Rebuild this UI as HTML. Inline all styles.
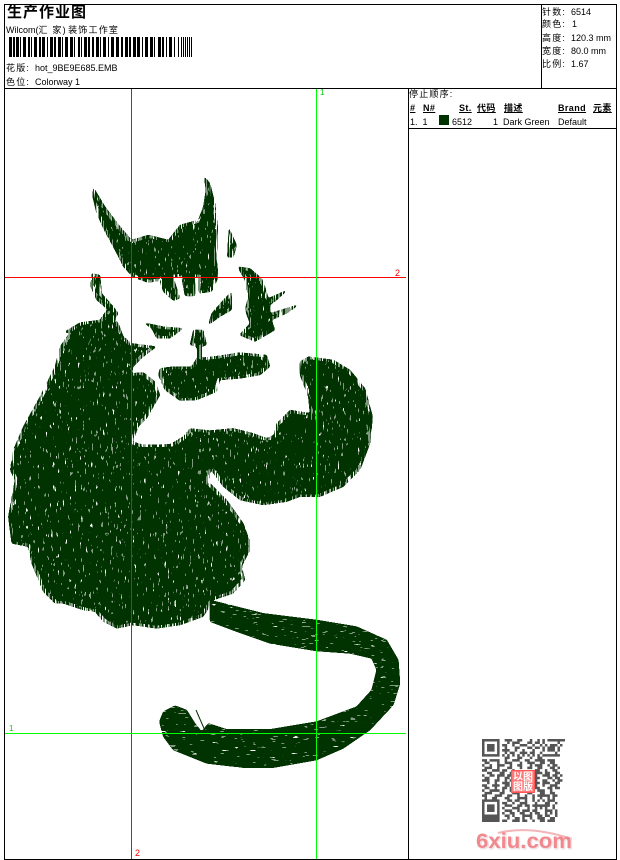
<!DOCTYPE html>
<html><head><meta charset="utf-8"><style>
html,body{margin:0;padding:0;background:#fff;width:620px;height:860px;overflow:hidden}
#p{position:relative;width:620px;height:860px;overflow:hidden;font:9px "Liberation Sans","WenQuanYi Zen Hei","Noto Sans CJK SC",sans-serif;color:#000}
.t{position:absolute;white-space:pre;line-height:12px}
.c{letter-spacing:1.2px}
.b{position:absolute;background:#000}
.u{font-weight:bold;text-decoration:underline;letter-spacing:.4px}
svg{position:absolute;left:0;top:0}
</style></head><body><div id="p">
<svg width="620" height="860">
<defs>
<filter id="fv" filterUnits="userSpaceOnUse" x="0" y="150" width="420" height="500" color-interpolation-filters="sRGB">
<feGaussianBlur in="SourceAlpha" stdDeviation="1" result="b"/>
<feComponentTransfer in="b" result="s"><feFuncA type="linear" slope="20" intercept="-7.5"/></feComponentTransfer>
<feTurbulence type="fractalNoise" baseFrequency=".6 .13" numOctaves="2" seed="4" result="n"/>
<feColorMatrix in="n" type="matrix" values="0 0 0 0 1 0 0 0 0 1 0 0 0 0 1 25 0 0 0 -17.6" result="sp"/>
<feTurbulence type="fractalNoise" baseFrequency=".9 .03" numOctaves="1" seed="9" result="n2"/>
<feColorMatrix in="n2" type="matrix" values="0 0 0 0 1 0 0 0 0 1 0 0 0 0 1 25 0 0 0 -13.5" result="st"/>
<feMorphology in="s" operator="erode" radius="2.5" result="core"/>
<feComposite in="st" in2="core" operator="out" result="fr"/>
<feFlood flood-color="#003300" result="f"/>
<feComposite in="f" in2="s" operator="in" result="d"/>
<feComposite in="d" in2="sp" operator="out" result="d2"/>
<feComposite in="d2" in2="fr" operator="out"/>
</filter>
<filter id="fh" filterUnits="userSpaceOnUse" x="140" y="590" width="280" height="190" color-interpolation-filters="sRGB">
<feGaussianBlur in="SourceAlpha" stdDeviation="1" result="b"/>
<feComponentTransfer in="b" result="s"><feFuncA type="linear" slope="20" intercept="-7.5"/></feComponentTransfer>
<feTurbulence type="fractalNoise" baseFrequency=".1 .7" numOctaves="2" seed="7" result="n"/>
<feColorMatrix in="n" type="matrix" values="0 0 0 0 1 0 0 0 0 1 0 0 0 0 1 25 0 0 0 -17.6" result="sp"/>
<feFlood flood-color="#003300" result="f"/>
<feComposite in="f" in2="s" operator="in" result="d"/>
<feComposite in="d" in2="sp" operator="out"/>
</filter>
</defs>
<g filter="url(#fv)" fill="#003300">
<g transform="translate(0,310) scale(.33333)">
<path d="M190 68L240 38 300 30 320 0 355 40 370 80 395 100 470 110 430 140 400 170 395 190 430 187 465 215 480 255 440 325 415 350 398 395 430 405 510 403 550 380 570 355 630 362 700 355 760 370 800 385 822 375 830 340 870 300 930 310 925 260 900 195 900 155 925 140 1000 150 1050 180 1095 235 1118 320 1110 400 1080 480 1030 530 960 560 900 560 860 575 790 585 720 570 670 530 632 478 625 515 680 570 730 640 755 710 725 770 735 810 700 850 640 870 610 920 540 945 470 955 400 945 350 955 310 935 285 905 250 900 190 880 165 880 130 845 95 760 85 710 35 700 25 620 45 510 30 480 40 420 70 350 120 260 165 170 180 110 210 68Z"/>
<path d="M480 175L520 170 575 170 590 145 640 140 720 128 800 135 810 170 780 195 720 205 660 210 650 245 590 270 540 272 495 240 475 195Z"/>
<path d="M580 60L610 60 620 105 605 110 605 145 590 145 590 110 570 105Z"/>
<path d="M430 38L490 50 550 55 510 85 470 85 455 55Z"/>
</g>
<g transform="translate(80,170) scale(.33333)">
<path d="M40 50L38 80 50 130 75 185 105 240 130 290 160 322 205 338 240 332 280 322 300 318 415 322 410 270 413 170 405 100 390 40 372 18 378 60 370 110 355 150 300 165 265 210 205 195 155 210 120 170 75 110 45 60Z"/>
<path d="M240 335L280 322 300 385 280 392 250 365Z"/>
<path d="M305 322L345 322 345 378 315 378Z"/>
<path d="M355 322L415 322 395 365 355 370Z"/>
<path d="M445 170L470 225 460 262 442 262 445 200Z"/>
<path d="M455 365L455 420 420 440 385 465 395 430 430 390Z"/>
<path d="M472 290L510 295 545 325 555 350 565 385 625 358 590 390 570 405 570 430 660 402 620 430 575 450 585 480 525 515 478 495 510 460 495 420 505 380 495 330Z"/>
<path d="M35 310L60 315 65 370 100 410 115 430 100 455 125 490 70 450 85 420 50 390 32 350Z"/>
</g>
</g>
<g filter="url(#fh)" fill="#003300">
<g transform="translate(130,590) scale(.33333)">
<path d="M240 30L400 70 560 90 680 110 770 150 805 210 810 280 790 345 720 420 640 475 560 510 430 533 340 533 230 520 130 480 100 440 88 395 100 365 135 347 170 360 195 400 215 425 235 400 290 418 420 418 560 395 680 350 725 300 740 240 725 205 660 190 560 183 420 160 320 125 240 95Z"/>
</g>
</g>
<path d="M196 710L206 733" stroke="#003300" stroke-width="1" fill="none"/>
<g shape-rendering="crispEdges">
<rect x="131" y="89" width="1" height="770" fill="#f00"/>
<rect x="5" y="277" width="401" height="1" fill="#f00"/>
<rect x="316" y="89" width="1" height="770" fill="#0f0"/>
<rect x="5" y="733" width="401" height="1" fill="#0f0"/>
<path fill="#000" d="M9 37h3v20H9zM13 37h2v20h-2zM16 37h3v20h-3zM20 37h1v20h-1zM23 37h3v20h-3zM28 37h2v20h-2zM31 37h1v20h-1zM34 37h3v20h-3zM39 37h2v20h-2zM42 37h3v20h-3zM47 37h1v20h-1zM50 37h3v20h-3zM54 37h2v20h-2zM58 37h3v20h-3zM62 37h1v20h-1zM65 37h3v20h-3zM70 37h3v20h-3zM74 37h1v20h-1zM78 37h2v20h-2zM81 37h1v20h-1zM84 37h3v20h-3zM88 37h2v20h-2zM92 37h2v20h-2zM96 37h3v20h-3zM100 37h1v20h-1zM103 37h3v20h-3zM108 37h1v20h-1zM111 37h3v20h-3zM116 37h3v20h-3zM121 37h2v20h-2zM125 37h3v20h-3zM129 37h2v20h-2zM133 37h3v20h-3zM137 37h3v20h-3zM142 37h1v20h-1zM145 37h3v20h-3zM150 37h3v20h-3zM154 37h1v20h-1zM158 37h3v20h-3zM162 37h2v20h-2zM166 37h1v20h-1zM169 37h3v20h-3zM174 37h1v20h-1zM178 37h1v20h-1zM181 37h1v20h-1zM183 37h1v20h-1zM185 37h1v20h-1zM187 37h1v20h-1zM189 37h1v20h-1zM191 37h1v20h-1z"/>
<rect x="439" y="115" width="10" height="10" fill="#003300"/>
</g>
</svg>
<div class="b" style="left:4px;top:4px;width:613px;height:1px"></div>
<div class="b" style="left:4px;top:859px;width:613px;height:1px"></div>
<div class="b" style="left:4px;top:4px;width:1px;height:856px"></div>
<div class="b" style="left:616px;top:4px;width:1px;height:856px"></div>
<div class="b" style="left:4px;top:88px;width:613px;height:1px"></div>
<div class="b" style="left:541px;top:4px;width:1px;height:84px"></div>
<div class="b" style="left:408px;top:88px;width:1px;height:771px"></div>
<div class="b" style="left:408px;top:128px;width:208px;height:1px"></div>
<div class="t" style="left:7px;top:4px;font-size:15px;line-height:18px;font-weight:bold;letter-spacing:1px">生产作业图</div>
<div class="t" style="left:6px;top:24px">Wilcom(<span class="c">汇 家</span>) <span class="c">装饰工作室</span></div>
<div class="t c" style="left:6px;top:62px">花版:</div><div class="t" style="left:35px;top:62px">hot_9BE9E685.EMB</div>
<div class="t c" style="left:6px;top:76px">色位:</div><div class="t" style="left:35px;top:76px">Colorway 1</div>
<div class="t c" style="left:542px;top:6px">针数:</div><div class="t" style="left:571px;top:6px">6514</div>
<div class="t c" style="left:542px;top:18px">颜色:</div><div class="t" style="left:572px;top:18px">1</div>
<div class="t c" style="left:542px;top:32px">高度:</div><div class="t" style="left:571px;top:32px">120.3 mm</div>
<div class="t c" style="left:542px;top:45px">宽度:</div><div class="t" style="left:571px;top:45px">80.0 mm</div>
<div class="t c" style="left:542px;top:58px">比例:</div><div class="t" style="left:571px;top:58px">1.67</div>
<div class="t c" style="left:409px;top:88px">停止顺序:</div>
<div class="t u" style="left:410px;top:102px">#</div>
<div class="t u" style="left:423px;top:102px">N#</div>
<div class="t u" style="left:459px;top:102px">St.</div>
<div class="t u" style="left:477px;top:102px">代码</div>
<div class="t u" style="left:504px;top:102px">描述</div>
<div class="t u" style="left:558px;top:102px">Brand</div>
<div class="t u" style="left:593px;top:102px">元素</div>
<div class="t" style="left:410px;top:116px">1.  1</div>
<div class="t" style="left:452px;top:116px">6512</div>
<div class="t" style="left:493px;top:116px">1</div>
<div class="t" style="left:503px;top:116px">Dark Green</div>
<div class="t" style="left:558px;top:116px">Default</div>
<div class="t" style="left:320px;top:87px;color:#0c0;font-size:8px">1</div>
<div class="t" style="left:9px;top:723px;color:#0c0;font-size:8px">1</div>
<div class="t" style="left:395px;top:267px;color:#f00">2</div>
<div class="t" style="left:135px;top:847px;color:#f00">2</div>
<svg style="left:482px;top:739px" width="83" height="83" viewBox="0 0 33 33">
<path fill="none" stroke="#555" d="M0 .5h7m2 0h3m2 0h2m3 0h1m2 0h1m1 0h1m1 0h7M0 1.500h1m5 0h1m3 0h1m1 0h3m3 0h2m1 0h2m1 0h1m5 0h1M0 2.500h1m1 0h3m1 0h1m1 0h2m2 0h1m2 0h3m2 0h1m2 0h1m1 0h1m1 0h3m1 0h1M0 3.500h1m1 0h3m1 0h1m2 0h1m3 0h2m3 0h2m1 0h2m1 0h1m1 0h3m1 0h1M0 4.500h1m1 0h3m1 0h1m1 0h3m2 0h1m2 0h1m3 0h1m3 0h1m1 0h3m1 0h1M0 5.500h1m5 0h1m2 0h1m1 0h2m2 0h3m1 0h2m2 0h1m5 0h1M0 6.500h7m1 0h1m1 0h1m1 0h1m1 0h1m1 0h1m1 0h1m1 0h1m1 0h1m1 0h7M9 7.500h2m3 0h2m3 0h1m2 0h2M0 8.500h2m1 0h4m2 0h1m2 0h3m2 0h2m2 0h4m1 0h3M1 9.500h2m3 0h1m2 0h3m3 0h1m2 0h3m2 0h2m2 0h2M0 10.500h1m2 0h1m2 0h3m2 0h1m2 0h2m3 0h1m1 0h3m2 0h1m1 0h2M1 11.500h3m2 0h1m3 0h2m3 0h1m2 0h2m2 0h2m3 0h2m1 0h1M0 12.500h2m2 0h3m1 0h2m2 0h1m8 0h2m2 0h1m2 0h2M2 13.500h2m3 0h2m2 0h1m9 0h3m1 0h2m2 0h2M0 14.500h1m2 0h2m1 0h3m1 0h2m9 0h1m2 0h3m1 0h2m1 0h1M1 15.500h2m3 0h1m2 0h2m9 0h3m3 0h2m1 0h2M0 16.500h3m2 0h2m2 0h1m1 0h1m9 0h1m2 0h2m2 0h1m1 0h2M2 17.500h1m2 0h1m2 0h3m10 0h2m1 0h3m2 0h2M0 18.500h2m2 0h3m2 0h2m10 0h1m2 0h1m2 0h3M1 19.500h2m2 0h1m2 0h2m1 0h2m7 0h3m3 0h2m1 0h2M0 20.500h1m2 0h4m1 0h1m2 0h1m2 0h3m1 0h2m2 0h3m2 0h1M1 21.500h3m3 0h2m3 0h3m3 0h2m3 0h2m2 0h2M0 22.500h2m3 0h3m2 0h2m2 0h1m2 0h1m2 0h1m1 0h5m1 0h2M1 23.500h1m2 0h2m3 0h2m3 0h4m2 0h1m2 0h1m2 0h1m1 0h1M0 24.500h7m3 0h2m1 0h2m2 0h1m2 0h1m1 0h1m1 0h1m1 0h3M0 25.500h1m5 0h1m1 0h2m2 0h1m2 0h3m3 0h1m3 0h2m2 0h1M0 26.500h1m1 0h3m1 0h1m2 0h3m2 0h2m1 0h2m1 0h7m1 0h1M0 27.500h1m1 0h3m1 0h1m1 0h1m3 0h3m3 0h1m2 0h1m1 0h1m1 0h1m2 0h1M0 28.500h1m1 0h3m1 0h1m2 0h3m2 0h1m1 0h3m1 0h2m3 0h3m1 0h1M0 29.500h1m5 0h1m1 0h1m2 0h2m2 0h2m2 0h1m1 0h2m2 0h1m1 0h1m1 0h1M0 30.500h7m2 0h2m1 0h1m3 0h4m2 0h2m1 0h2m2 0h1M0 31.500h7m3 0h1m2 0h2m1 0h1m2 0h1m2 0h3m2 0h2M0 32.500h7m1 0h2m2 0h3m1 0h2m2 0h1m2 0h2m1 0h3"/>
</svg>
<div style="position:absolute;left:511px;top:770px;width:22px;height:21px;background:#f77;border:1px solid #f55;color:#fff;font:bold 10px/10px 'WenQuanYi Zen Hei','Noto Sans CJK SC',sans-serif;text-align:center;word-break:break-all">以图<br>图版</div>
<svg width="620" height="860" style="left:0;top:0">
<path d="M498 833Q530 825 572 839" fill="none" stroke="#f2b4b8" stroke-width="2"/>
<text x="477" y="849" font-family="Liberation Sans" font-weight="bold" font-size="21" textLength="96" lengthAdjust="spacingAndGlyphs" fill="#eee2e4" stroke="#eee2e4" stroke-width="1">6xiu.com</text>
<text x="476" y="848" font-family="Liberation Sans" font-weight="bold" font-size="21" textLength="96" lengthAdjust="spacingAndGlyphs" fill="#f0888e">6xiu.com</text>
</svg>
</div></body></html>
